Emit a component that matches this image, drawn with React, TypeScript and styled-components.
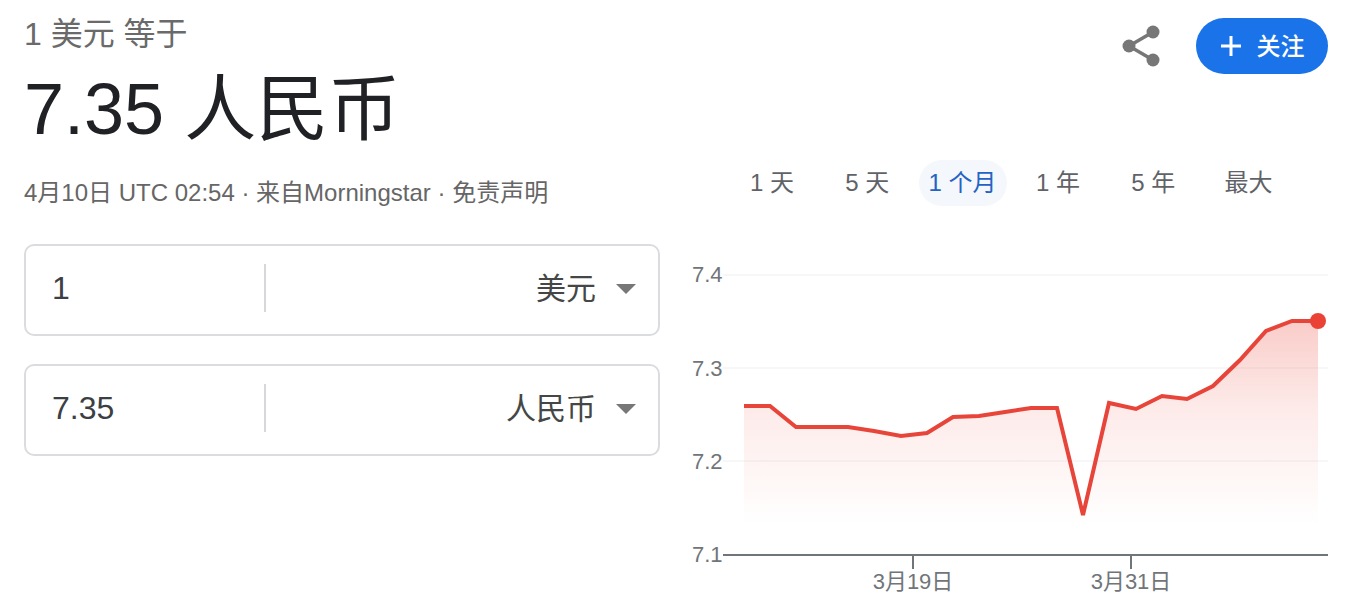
import React from 'react';
import styled, { createGlobalStyle } from 'styled-components';

const GlobalStyle = createGlobalStyle`
  html, body {
    margin: 0;
    padding: 0;
    background: #fff;
    overflow: hidden;
  }
  body {
    font-family: 'Liberation Sans', 'Noto Sans CJK SC', sans-serif;
  }
`;

const Page = styled.div`
  display: grid;
  grid-template-columns: 636px 638px;
  column-gap: 30px;
  width: 1354px;
  height: 606px;
  padding-left: 24px;
  box-sizing: border-box;
`;

const Summary = styled.div`
  display: flex;
  flex-direction: column;
  padding-top: 16px;
`;

const Eyebrow = styled.div`
  font-size: 32px;
  line-height: 36px;
  color: #6a6a6a;
`;

const Price = styled.div`
  margin-top: 15px;
  font-size: 72px;
  line-height: 84px;
  color: #202124;
`;

const Meta = styled.div`
  margin-top: 26px;
  font-size: 24px;
  line-height: 32px;
  color: #666;
`;

const Fields = styled.div`
  display: flex;
  flex-direction: column;
  gap: 28px;
  margin-top: 35px;
`;

const Field = styled.div`
  display: flex;
  align-items: center;
  height: 92px;
  box-sizing: border-box;
  border: 2px solid #dadce0;
  border-radius: 10px;
`;

const Amount = styled.div`
  width: 238px;
  box-sizing: border-box;
  padding: 0 0 3px 26px;
  font-size: 32px;
  color: #3c4043;
`;

const Divider = styled.div`
  width: 2px;
  height: 48px;
  margin-bottom: 4px;
  background: #d5d7da;
`;

const Currency = styled.div`
  flex: 1;
  display: flex;
  justify-content: flex-end;
  align-items: center;
  gap: 20px;
  padding: 0 22px 8px 0;
  font-size: 30px;
  color: #444746;
`;

const Caret = styled.span`
  width: 0;
  height: 0;
  margin-top: 6px;
  border-left: 10.5px solid transparent;
  border-right: 10.5px solid transparent;
  border-top: 10px solid #777;
`;

const Market = styled.div`
  display: flex;
  flex-direction: column;
`;

const Actions = styled.div`
  display: flex;
  justify-content: flex-end;
  align-items: center;
  gap: 34px;
  margin-top: 18px;
`;

const ShareButton = styled.button`
  display: flex;
  padding: 0;
  border: none;
  background: none;
`;

const FollowButton = styled.button`
  display: flex;
  align-items: center;
  justify-content: center;
  gap: 15px;
  width: 132px;
  height: 56px;
  padding: 0;
  border: none;
  border-radius: 28px;
  background: #1a73e8;
  color: #fff;
  font-family: inherit;
  font-size: 24px;
  font-weight: 500;
`;

const FollowLabel = styled.span`
  margin-bottom: 4px;
`;

const Tabs = styled.div`
  display: flex;
  gap: 7.3px;
  margin-top: 86px;
  margin-left: 38px;
`;

const Tab = styled.div<{ $active?: boolean }>`
  width: 88px;
  height: 46px;
  border-radius: 23px;
  background: ${(p) => (p.$active ? '#f4f7fb' : 'transparent')};
  color: ${(p) => (p.$active ? '#2463c4' : '#5f6368')};
  font-size: 24px;
  line-height: 46px;
  text-align: center;
`;

const Chart = styled.svg`
  display: block;
  margin-top: 44px;
`;

const AxisLabel = styled.text`
  fill: #70757a;
  font-size: 22px;
`;

const tabs = ['1 天', '5 天', '1 个月', '1 年', '5 年', '最大'];

const points: [number, number][] = [
  [744, 406], [770, 406], [796, 427], [822, 427], [848, 427], [874, 431],
  [901, 436], [927, 433], [953, 417], [979, 416], [1005, 412], [1031, 408],
  [1057, 408], [1083, 515], [1109, 403], [1136, 409], [1162, 396], [1187, 399],
  [1213, 386], [1240, 360], [1266, 331], [1292, 321], [1318, 321],
];

const line = points.map(([x, y]) => `${x},${y}`).join(' ');
const area = `744,530 ${line} 1318,530`;

const App = () => (
  <>
    <GlobalStyle />
    <Page>
      <Summary>
        <Eyebrow>1 美元 等于</Eyebrow>
        <Price>7.35 人民币</Price>
        <Meta>4月10日 UTC 02:54 · 来自Morningstar · 免责声明</Meta>
        <Fields>
          <Field>
            <Amount>1</Amount>
            <Divider />
            <Currency>
              美元
              <Caret />
            </Currency>
          </Field>
          <Field>
            <Amount>7.35</Amount>
            <Divider />
            <Currency>
              人民币
              <Caret />
            </Currency>
          </Field>
        </Fields>
      </Summary>
      <Market>
        <Actions>
          <ShareButton aria-label="分享">
            <svg width="40" height="48" viewBox="0 0 40 48">
              <g stroke="#777" strokeWidth="3.5">
                <line x1="7" y1="24" x2="31" y2="10" />
                <line x1="7" y1="24" x2="31" y2="38" />
              </g>
              <g fill="#777">
                <circle cx="31" cy="10" r="6.5" />
                <circle cx="7" cy="24" r="6.5" />
                <circle cx="31" cy="38" r="6.5" />
              </g>
            </svg>
          </ShareButton>
          <FollowButton>
            <svg width="22" height="22" viewBox="0 0 22 22">
              <path d="M11 1v20M1 11h20" stroke="#fff" strokeWidth="3" fill="none" />
            </svg>
            <FollowLabel>关注</FollowLabel>
          </FollowButton>
        </Actions>
        <Tabs>
          {tabs.map((t) => (
            <Tab key={t} $active={t === '1 个月'}>
              {t}
            </Tab>
          ))}
        </Tabs>
        <Chart width="638" height="350" viewBox="690 250 638 350">
          <defs>
            <linearGradient id="areaFill" x1="0" y1="321" x2="0" y2="525" gradientUnits="userSpaceOnUse">
              <stop offset="0" stopColor="#ea4335" stopOpacity="0.27" />
              <stop offset="0.42" stopColor="#ea4335" stopOpacity="0.11" />
              <stop offset="1" stopColor="#ea4335" stopOpacity="0" />
            </linearGradient>
          </defs>
          <g stroke="#f7f7f8" strokeWidth="2">
            <line x1="723" y1="275" x2="1328" y2="275" />
            <line x1="723" y1="368" x2="1328" y2="368" />
            <line x1="723" y1="461" x2="1328" y2="461" />
          </g>
          <polygon points={area} fill="url(#areaFill)" />
          <polyline points={line} fill="none" stroke="#e8453a" strokeWidth="4" strokeLinejoin="miter" />
          <circle cx="1318" cy="321" r="8" fill="#ea4335" />
          <g stroke="#70757a" strokeWidth="2">
            <line x1="723" y1="555" x2="1328" y2="555" />
            <line x1="913" y1="555" x2="913" y2="569" />
            <line x1="1131" y1="555" x2="1131" y2="569" />
          </g>
          <AxisLabel x="692" y="282">7.4</AxisLabel>
          <AxisLabel x="692" y="376">7.3</AxisLabel>
          <AxisLabel x="692" y="469">7.2</AxisLabel>
          <AxisLabel x="692" y="562">7.1</AxisLabel>
          <AxisLabel x="913" y="589" textAnchor="middle">3月19日</AxisLabel>
          <AxisLabel x="1131" y="589" textAnchor="middle">3月31日</AxisLabel>
        </Chart>
      </Market>
    </Page>
  </>
);

export default App;
